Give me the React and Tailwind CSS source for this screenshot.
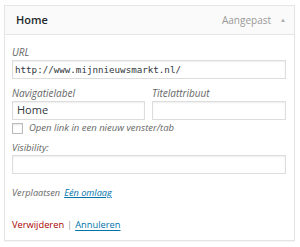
export default function App() {
  const font = { fontFamily: '"Open Sans", "Noto Sans", sans-serif' };
  return (
    <div className="w-[300px] h-[247px] bg-white pt-[5px] pl-[4px]" style={font}>
      <div className="w-[291px] h-[236px] border border-[#e5e5e5] bg-white shadow-[0_1px_1px_rgba(0,0,0,0.04)] flex flex-col">
        <div className="h-[29px] bg-[#fafafa] border-b border-[#e5e5e5] flex items-center pl-[11px] pr-[8px]">
          <span className="text-[11px] font-semibold text-[#23282d]">Home</span>
          <span className="ml-auto text-[10px] text-[#999]">Aangepast</span>
          <span className="ml-[9px] text-[6px] text-[#aaa] leading-none">▲</span>
        </div>
        <div className="pl-[7px] pr-[8px] pt-[11px] flex flex-col">
          <label className="text-[10px] italic text-[#666] leading-[13px]">URL</label>
          <div className="mt-[1px] h-[19px] border border-[#ddd] flex items-center pl-[2px] shadow-[inset_0_1px_2px_rgba(0,0,0,0.07)]">
            <span className="text-[9.2px] text-[#32373c]" style={{ fontFamily: '"DejaVu Sans Mono", monospace' }}>http://www.mijnnieuwsmarkt.nl/</span>
          </div>
          <div className="mt-[8px] flex gap-[7px]">
            <div className="flex flex-col w-[133px]">
              <label className="text-[10px] italic text-[#666] leading-[13px]">Navigatielabel</label>
              <div className="mt-[1px] h-[19px] border border-[#ddd] flex items-center pl-[4px] shadow-[inset_0_1px_2px_rgba(0,0,0,0.07)]">
                <span className="text-[11px] text-[#32373c]">Home</span>
              </div>
            </div>
            <div className="flex flex-col flex-1">
              <label className="text-[10px] italic text-[#666] leading-[13px]">Titelattribuut</label>
              <div className="mt-[1px] h-[19px] border border-[#ddd] shadow-[inset_0_1px_2px_rgba(0,0,0,0.07)]"></div>
            </div>
          </div>
          <div className="mt-[1px] flex items-center">
            <div className="w-[11px] h-[11px] border border-[#bbb] shadow-[inset_0_1px_2px_rgba(0,0,0,0.1)]"></div>
            <span className="ml-[6px] text-[9.5px] italic text-[#666]">Open link in een nieuw venster/tab</span>
          </div>
          <label className="mt-[6px] text-[9.5px] italic text-[#666] leading-[13px]">Visibility:</label>
          <div className="mt-[1px] h-[19px] border border-[#ddd] shadow-[inset_0_1px_2px_rgba(0,0,0,0.07)]"></div>
          <div className="mt-[12px] flex items-center text-[9.2px] italic">
            <span className="text-[#666]">Verplaatsen</span>
            <span className="ml-[4px] text-[#0073aa] underline">Eén omlaag</span>
          </div>
          <div className="mt-[18px] flex items-center text-[9.3px]">
            <span className="text-[#a00]">Verwijderen</span>
            <span className="mx-[3px] text-[#999]">|</span>
            <span className="text-[#0073aa] underline underline-offset-2">Annuleren</span>
          </div>
        </div>
      </div>
    </div>
  );
}
